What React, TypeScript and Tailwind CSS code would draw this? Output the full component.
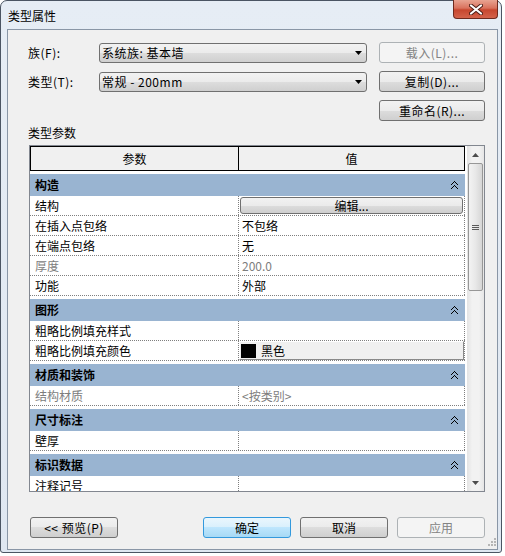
import type { ReactNode } from 'react'

const FACE =
  'rounded-[3px] border border-[#707070] bg-[linear-gradient(to_bottom,#f2f2f2_0%,#ebebeb_50%,#dddddd_50%,#cfcfcf_100%)] text-black'
const BTN = `flex items-center justify-center ${FACE}`
const BTN_OFF =
  'flex items-center justify-center rounded-[3px] border border-[#adb2b5] bg-[#f4f4f4] text-[#838383]'
const DOT = 'border-dotted border-[#7f7f7f]'

function DownTri({ color = '#000' }: { color?: string }) {
  return (
    <svg width="7" height="4" viewBox="0 0 7 4">
      <path d="M0 0h7L3.5 4z" fill={color} />
    </svg>
  )
}

function UpTri({ color = '#000' }: { color?: string }) {
  return (
    <svg width="7" height="4" viewBox="0 0 7 4">
      <path d="M0 4h7L3.5 0z" fill={color} />
    </svg>
  )
}

function Collapse() {
  // double chevron pointing up
  return (
    <svg width="7" height="9" viewBox="0 0 7 9" shapeRendering="crispEdges">
      <path d="M3 0h1v1h1v1h1v1h1v1H6V3H5V2H4V1H3v1H2v1H1v1H0V3h1V2h1V1h1z" fill="#000" />
      <path d="M3 4h1v1h1v1h1v1h1v1H6V7H5V6H4V5H3v1H2v1H1v1H0V7h1V6h1V5h1z" fill="#000" />
    </svg>
  )
}

function Combo({ value }: { value: string }) {
  return (
    <div className={`flex h-[20px] w-[268px] items-center justify-between pl-[2px] pr-[4px] ${FACE}`}>
      <span className="tracking-[0.5px]">{value}</span>
      <DownTri />
    </div>
  )
}

function Group({ title, children }: { title: string; children: ReactNode }) {
  return (
    <div className="mt-[3px] flex flex-col">
      <div className="flex h-[22px] shrink-0 items-center justify-between bg-[#99b4d1] pl-[5px] pr-[7px] font-bold">
        <span>{title}</span>
        <Collapse />
      </div>
      {children}
    </div>
  )
}

function Row({ name, children, dim }: { name: string; children?: ReactNode; dim?: boolean }) {
  return (
    <div className={`flex h-[20px] shrink-0 border-b ${DOT}`}>
      <div
        className={`flex w-[209px] items-center border-r pl-[5px] ${DOT} ${dim ? 'text-[#7d7d7d]' : ''}`}
      >
        {name}
      </div>
      <div className={`flex flex-1 items-center border-r ${DOT} ${dim ? 'text-[#7d7d7d]' : ''}`}>
        {children}
      </div>
    </div>
  )
}

function Val({ children }: { children: ReactNode }) {
  return <span className="pl-[3px]">{children}</span>
}

export default function App() {
  return (
    <div className="h-[556px] w-[505px] bg-white font-['Noto_Sans_CJK_SC',sans-serif] text-[12px] leading-[14px] text-black">
      <div className="flex h-[553px] w-[502px] flex-col rounded-t-[7px] rounded-b-[3px] border border-[#4b5563] bg-[linear-gradient(to_bottom,#e6edf5,#dfe7f1)]">
        {/* Title bar */}
        <div className="relative h-[28px] shrink-0 pl-[7px] pt-[8px]">
          <span>类型属性</span>
          <div className="absolute right-[3px] top-[-1px] flex h-[19px] w-[45px] items-center justify-center rounded-b-[4px] border border-t-0 border-[#6e2a1e] bg-[linear-gradient(to_bottom,#e8a492_0%,#d9725d_45%,#c7472f_55%,#d4634b_100%)]">
            <svg width="14" height="11" viewBox="0 0 14 11">
              <path d="M2 1.5l10 8M12 1.5l-10 8" stroke="#4a1c14" strokeWidth="4" strokeLinecap="round" />
              <path d="M2 1.5l10 8M12 1.5l-10 8" stroke="#fff" strokeWidth="2.2" strokeLinecap="round" />
            </svg>
          </div>
        </div>

        {/* Client area */}
        <div className="ml-[6px] mr-[3px] flex flex-1 flex-col border border-[#8996a6] bg-[#f0f0f0]">
          <div className="flex flex-col gap-[8px] pt-[12px] pr-[12px]">
            <div className="flex items-center">
              <span className="w-[91px] pl-[20px] tracking-[0.5px]">族(F):</span>
              <Combo value="系统族: 基本墙" />
              <div className={`${BTN_OFF} ml-auto h-[21px] w-[106px] tracking-[0.5px]`}>载入(L)...</div>
            </div>
            <div className="flex items-center">
              <span className="w-[91px] pl-[20px] tracking-[0.5px]">类型(T):</span>
              <Combo value="常规 - 200mm" />
              <div className={`${BTN} ml-auto h-[21px] w-[106px] tracking-[0.5px]`}>复制(D)...</div>
            </div>
            <div className="flex items-center">
              <div className={`${BTN} ml-auto h-[21px] w-[106px] tracking-[0.5px]`}>重命名(R)...</div>
            </div>
          </div>

          <div className="mt-[4px] pl-[20px] leading-[16px]">类型参数</div>

          {/* Property grid */}
          <div className="ml-[21px] mt-[4px] flex h-[347px] w-[456px] border border-[#828790] bg-white">
            <div className="flex w-[435px] flex-col overflow-hidden">
              <div className="flex h-[25px] shrink-0 border border-black bg-[#f0f0f0]">
                <div className="flex w-[208px] items-center justify-center border-r border-black">参数</div>
                <div className="flex flex-1 items-center justify-center">值</div>
              </div>

              <Group title="构造">
                <Row name="结构">
                  <div className="flex h-full w-full p-[1px]">
                    <div className={`${BTN} h-[17px] w-full`}>编辑...</div>
                  </div>
                </Row>
                <Row name="在插入点包络">
                  <Val>不包络</Val>
                </Row>
                <Row name="在端点包络">
                  <Val>无</Val>
                </Row>
                <Row name="厚度" dim>
                  <Val>200.0</Val>
                </Row>
                <Row name="功能">
                  <Val>外部</Val>
                </Row>
              </Group>

              <Group title="图形">
                <Row name="粗略比例填充样式" />
                <Row name="粗略比例填充颜色">
                  <div className="flex h-full w-full items-center gap-[5px] border border-b-[#8a8a8a] border-l-white border-r-[#8a8a8a] border-t-white bg-[#f0f0f0] pl-[1px]">
                    <span className="h-[14px] w-[15px] bg-black" />
                    <span>黑色</span>
                  </div>
                </Row>
              </Group>

              <Group title="材质和装饰">
                <Row name="结构材质" dim>
                  <Val>&lt;按类别&gt;</Val>
                </Row>
              </Group>

              <Group title="尺寸标注">
                <Row name="壁厚" />
              </Group>

              <Group title="标识数据">
                <Row name="注释记号" />
              </Group>
            </div>

            {/* Scrollbar */}
            <div className="ml-auto flex w-[17px] flex-col bg-[linear-gradient(to_right,#e3e3e3,#f2f2f2_30%,#f2f2f2_70%,#e6e6e6)]">
              <div className="flex h-[17px] items-center justify-center">
                <UpTri color="#4d4d4d" />
              </div>
              <div className="mx-[1px] flex h-[128px] items-center justify-center rounded-[2px] border border-[#979797] bg-[linear-gradient(to_right,#f3f3f3,#e8e8e8_50%,#d6d6d6)]">
                <div className="flex flex-col gap-[1px]">
                  <span className="h-[1px] w-[7px] bg-[#5a5a5a]" />
                  <span className="h-[1px] w-[7px] bg-[#5a5a5a]" />
                  <span className="h-[1px] w-[7px] bg-[#5a5a5a]" />
                </div>
              </div>
              <div className="mt-auto flex h-[17px] items-center justify-center">
                <DownTri color="#4d4d4d" />
              </div>
            </div>
          </div>

          {/* Bottom buttons */}
          <div className="mt-[25px] flex pl-[22px] pr-[12px]">
            <div className={`${BTN} h-[21px] w-[88px] tracking-[0.5px]`}>&lt;&lt; 预览(P)</div>
            <div className="ml-auto flex gap-[9px]">
              <div className="flex h-[21px] w-[88px] items-center justify-center rounded-[3px] border border-[#3399dd] bg-[linear-gradient(to_bottom,#eaf6fd_0%,#d9f0fc_50%,#bee6fd_50%,#a7d9f5_100%)]">
                确定
              </div>
              <div className={`${BTN} h-[21px] w-[88px]`}>取消</div>
              <div className={`${BTN_OFF} h-[21px] w-[88px]`}>应用</div>
            </div>
          </div>

          {/* Size grip */}
          <div className="mt-auto flex justify-end pb-[1px] pr-[1px]">
            <svg width="10" height="10" viewBox="0 0 10 10" shapeRendering="crispEdges">
              {[
                [8, 0],
                [5, 3],
                [8, 3],
                [2, 6],
                [5, 6],
                [8, 6],
              ].map(([x, y]) => (
                <rect key={`${x}-${y}`} x={x} y={y} width="2" height="2" fill="#b5b5b5" />
              ))}
            </svg>
          </div>
        </div>
        <div className="h-[5px] shrink-0" />
      </div>
    </div>
  )
}
